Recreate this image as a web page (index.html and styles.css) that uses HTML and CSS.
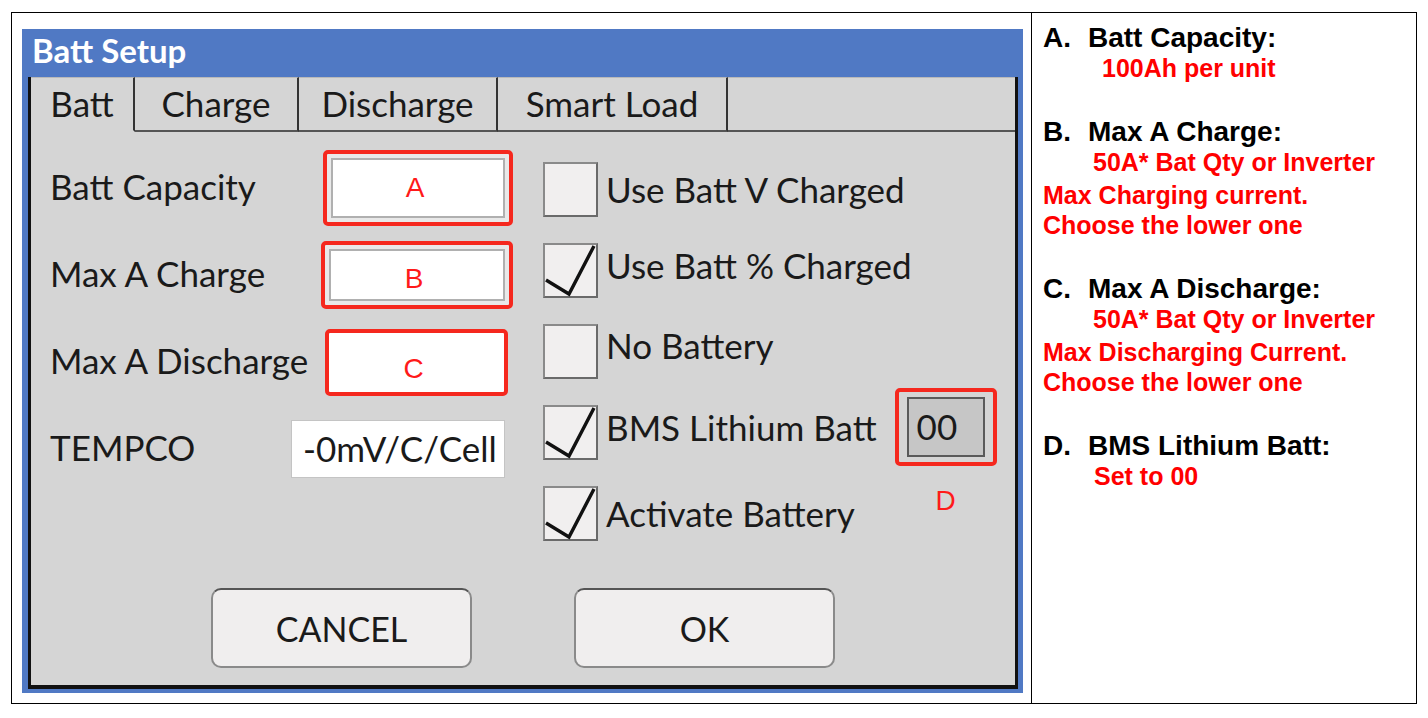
FILE: index.html
```html
<!DOCTYPE html>
<html>
<head>
<meta charset="utf-8">
<link rel="stylesheet" href="styles.css">
</head>
<body>
<div class="doc">
  <div class="shot">
    <div class="dialog">
      <div class="title">Batt Setup</div>
      <div class="panel">
        <div class="tabs">
          <div class="tab active t1">Batt</div>
          <div class="tab t2">Charge</div>
          <div class="tab t3">Discharge</div>
          <div class="tab t4">Smart Load</div>
          <div class="tab rest"></div>
        </div>
        <div class="content">
          <div class="fields">
            <div class="frow">
              <span class="flabel">Batt Capacity</span>
              <div class="redbox rb-a"><div class="inbox">A</div></div>
            </div>
            <div class="frow">
              <span class="flabel">Max A Charge</span>
              <div class="redbox rb-b"><div class="inbox low">B</div></div>
            </div>
            <div class="frow">
              <span class="flabel">Max A Discharge</span>
              <div class="redbox rb-c"><div class="inbox plain low">C</div></div>
            </div>
            <div class="frow">
              <span class="flabel">TEMPCO</span>
              <div class="tempco">-0mV/C/Cell</div>
            </div>
          </div>
          <div class="checks">
            <div class="crow">
              <div class="cb"></div>
              <span class="clabel">Use Batt V Charged</span>
            </div>
            <div class="crow">
              <div class="cb"><svg viewBox="0 0 51 51"><polyline points="1,35 24,49 49,1"/></svg></div>
              <span class="clabel up">Use Batt % Charged</span>
            </div>
            <div class="crow">
              <div class="cb"></div>
              <span class="clabel up2">No Battery</span>
            </div>
            <div class="crow">
              <div class="cb"><svg viewBox="0 0 51 51"><polyline points="1,35 24,49 49,1"/></svg></div>
              <span class="clabel up">BMS Lithium Batt</span>
              <div class="redbox rb-d">
                <div class="graybox">00</div>
                <span class="dmark">D</span>
              </div>
            </div>
            <div class="crow">
              <div class="cb"><svg viewBox="0 0 51 51"><polyline points="1,35 24,49 49,1"/></svg></div>
              <span class="clabel">Activate Battery</span>
            </div>
          </div>
        </div>
        <div class="buttons">
          <div class="btn">CANCEL</div>
          <div class="btn">OK</div>
        </div>
      </div>
    </div>
  </div>
  <div class="notes">
    <div class="note first">
      <div class="head"><span class="mk">A.</span><span>Batt Capacity:</span></div>
      <div class="red ind-a">100Ah per unit</div>
    </div>
    <div class="note">
      <div class="head"><span class="mk">B.</span><span>Max A Charge:</span></div>
      <div class="red ind">50A* Bat Qty or Inverter</div>
      <div class="red">Max Charging current.<br>Choose the lower one</div>
    </div>
    <div class="note">
      <div class="head"><span class="mk">C.</span><span>Max A Discharge:</span></div>
      <div class="red ind">50A* Bat Qty or Inverter</div>
      <div class="red">Max Discharging Current.<br>Choose the lower one</div>
    </div>
    <div class="note">
      <div class="head"><span class="mk">D.</span><span>BMS Lithium Batt:</span></div>
      <div class="red ind-d">Set to 00</div>
    </div>
  </div>
</div>
</body>
</html>
```

FILE: styles.css
```css
* { box-sizing: border-box; }
body {
  margin: 0;
  background: #fff;
  font-family: Lato, "Open Sans", sans-serif;
}
.doc {
  display: flex;
  margin: 12px 0 0 11px;
  width: 1406px;
  height: 692px;
  border: 1px solid #000;
}
.shot {
  width: 1020px;
  flex: none;
  border-right: 1px solid #000;
  padding: 16px 8px 10px 10px;
}
.dialog {
  height: 100%;
  display: flex;
  flex-direction: column;
  background: #5079c4;
  padding: 0 5px 4px 6px;
}
.title {
  height: 48px;
  flex: none;
  color: #fff;
  font-weight: 700;
  font-size: 33px;
  line-height: 42px;
  padding-left: 4px;
}
.panel {
  flex: 1;
  display: flex;
  flex-direction: column;
  background: #d5d5d5;
  border-left: 3px solid #111;
  border-right: 3px solid #111;
  border-bottom: 4px solid #111;
  color: #1a1a1a;
}
.tabs {
  display: flex;
  height: 55px;
  flex: none;
}
.tab {
  height: 55px;
  border-right: 2px solid #333;
  border-bottom: 2px solid #555;
  border-top: 1px solid #b9b9b9;
  display: flex;
  align-items: center;
  justify-content: center;
  font-size: 35px;
  padding-bottom: 2px;
}
.tab.active { border-bottom-color: transparent; }
.t1 { width: 104px; }
.t2 { width: 164px; }
.t3 { width: 199px; }
.t4 { width: 230px; }
.tab.rest { flex: 1; border-right: 0; }

.content {
  flex: 1;
  display: flex;
  padding: 18px 0 0 19px;
}
.fields {
  width: 463px;
  display: flex;
  flex-direction: column;
  gap: 11px;
}
.frow {
  height: 76px;
  display: flex;
  align-items: center;
  justify-content: space-between;
}
.flabel {
  font-size: 35px;
  padding-bottom: 4px;
}
.redbox {
  border: 4px solid #f5281e;
  border-radius: 5px;
  padding: 4px;
  background: #e9e9e9;
}
.rb-a { width: 190px; height: 76px; }
.rb-b { width: 192px; height: 68px; }
.rb-c { width: 183px; height: 67px; margin-right: 5px; padding: 1px; background: #fff; }
.inbox {
  height: 100%;
  background: #fff;
  border: 2px solid #b0b0b0;
  color: #ff1a1a;
  font-family: "Liberation Sans", Arial, sans-serif;
  font-size: 28px;
  display: flex;
  align-items: center;
  justify-content: center;
  padding-right: 6px;
}
.inbox.low { padding-top: 8px; }
.inbox.plain { border: 0; padding-top: 14px; }
.tempco {
  width: 214px;
  height: 58px;
  margin-right: 8px;
  background: #fff;
  border: 1px solid #c4c4c4;
  font-size: 35px;
  padding-left: 11px;
  line-height: 54px;
}

.checks {
  margin-left: 30px;
  padding-top: 12px;
  display: flex;
  flex-direction: column;
  gap: 26px;
}
.crow {
  height: 55px;
  display: flex;
  align-items: center;
}
.cb {
  width: 55px;
  height: 55px;
  flex: none;
  background: #f1efef;
  border: 2px solid #6a6a6a;
  border-top-color: #8a8a8a;
  border-left-color: #8a8a8a;
}
.cb svg {
  display: block;
  width: 51px;
  height: 51px;
  overflow: visible;
}
.cb polyline {
  fill: none;
  stroke: #111;
  stroke-width: 3.4;
}
.clabel {
  margin-left: 8px;
  font-size: 35px;
  padding-bottom: 2px;
}
.clabel.up { padding-bottom: 12px; }
.clabel.up2 { padding-bottom: 14px; }
.rb-d {
  position: relative;
  width: 102px;
  height: 78px;
  margin-left: 18px;
  margin-bottom: 11px;
  padding: 5px 8px 5px 8px;
  background: #d5d5d5;
}
.graybox {
  height: 100%;
  background: #c6c6c6;
  border: 2px solid #5a5a5a;
  font-size: 35px;
  line-height: 54px;
  padding-left: 8px;
}
.dmark {
  position: absolute;
  left: 0;
  right: 0;
  top: calc(100% + 25px);
  text-align: center;
  color: #ff1a1a;
  font-family: "Liberation Sans", Arial, sans-serif;
  font-size: 28px;
  line-height: 28px;
}

.buttons {
  flex: none;
  display: flex;
  justify-content: center;
  gap: 102px;
  padding-bottom: 17px;
}
.btn {
  width: 261px;
  height: 80px;
  background: #f0eeee;
  border: 2px solid #8a8a8a;
  border-top-color: #555;
  border-radius: 10px;
  display: flex;
  align-items: center;
  justify-content: center;
  font-size: 34px;
}

.notes {
  flex: 1;
  padding: 10px 0 0 11px;
  font-family: "Liberation Sans", Arial, sans-serif;
  font-weight: 700;
}
.note + .note { margin-top: 34px; }
.note.first { margin-bottom: 4px; }
.head {
  display: flex;
  font-size: 28px;
  line-height: 30px;
  color: #000;
}
.mk { width: 45px; flex: none; }
.red {
  color: #f00;
  font-size: 25px;
  line-height: 30px;
}
.ind { padding-left: 50px; margin-bottom: 3px; }
.ind-a { padding-left: 59px; }
.ind-d { padding-left: 51px; }
```
